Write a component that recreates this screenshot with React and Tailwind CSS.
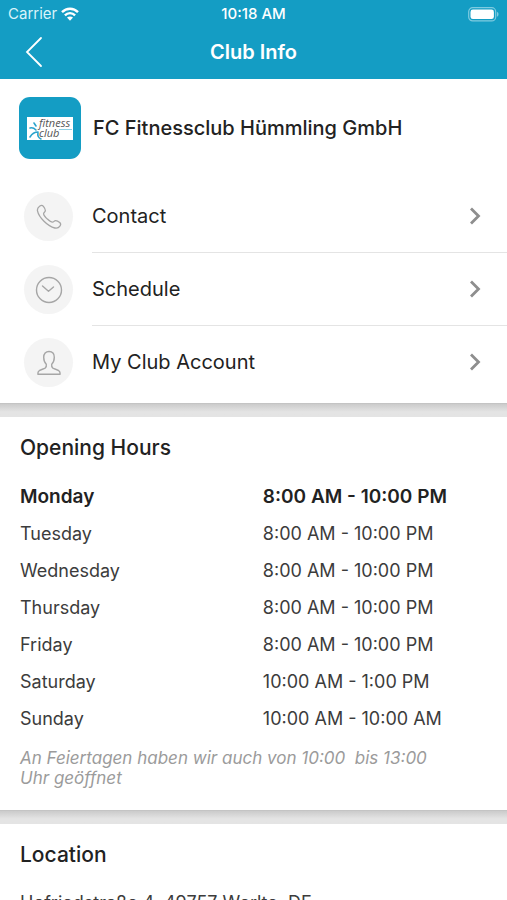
const links = [
  { label: 'Contact', icon: PhoneIcon },
  { label: 'Schedule', icon: ClockIcon },
  { label: 'My Club Account', icon: PersonIcon },
]

const hours = [
  { day: 'Monday', time: '8:00 AM - 10:00 PM', today: true },
  { day: 'Tuesday', time: '8:00 AM - 10:00 PM' },
  { day: 'Wednesday', time: '8:00 AM - 10:00 PM' },
  { day: 'Thursday', time: '8:00 AM - 10:00 PM' },
  { day: 'Friday', time: '8:00 AM - 10:00 PM' },
  { day: 'Saturday', time: '10:00 AM - 1:00 PM' },
  { day: 'Sunday', time: '10:00 AM - 10:00 AM' },
]

function PhoneIcon() {
  return (
    <svg viewBox="0 0 26 26" className="size-[26px]" fill="none" stroke="currentColor" strokeWidth="1.3" strokeLinejoin="round">
      <path d="M3.6 2.2C4.9 1.3 6.5 1.3 7.4 2.4C8.6 3.900 9.500 5.300 9.300 6.800C9.100 8.100 7.500 8.400 7.600 9.800C7.800 11.300 9.600 13.400 11.400 15.100C13.200 16.700 15 18.200 16.400 18.200C17.900 18.200 18.100 16.700 19.500 16.600C21.100 16.500 22.500 17.500 23.700 18.500C24.900 19.600 24.800 21 23.900 22.200C22.700 23.900 20.900 24.500 18.800 24C15.200 23.200 11.300 20.600 8 17.300C4.700 14 2.200 10.200 1.500 6.900C1.100 4.900 2 3.300 3.600 2.200Z" />
    </svg>
  )
}

function ClockIcon() {
  return (
    <svg viewBox="0 0 28 28" className="size-7" fill="none" stroke="currentColor" strokeWidth="1.4">
      <circle cx="14" cy="14" r="12.5" />
      <path d="M7.500 10L13.500 15.300L18.500 11" strokeLinecap="round" strokeLinejoin="round" />
    </svg>
  )
}

function PersonIcon() {
  return (
    <svg viewBox="0 0 24 26" className="h-[26px] w-6" fill="none" stroke="currentColor" strokeWidth="1.4" strokeLinejoin="round">
      <path d="M12 1.500C15.200 1.500 17.300 3.700 17.300 7.300C17.300 10.300 16.300 12.700 14.700 14.200C14.400 15.900 14.700 17.400 15.900 18.200C18 19.400 21.500 19.500 22.600 21.500C23 22.300 23.100 23.200 23.100 24.200H0.900C0.900 23.200 1 22.300 1.400 21.500C2.500 19.500 6 19.400 8.100 18.200C9.300 17.400 9.600 15.900 9.300 14.200C7.700 12.700 6.700 10.300 6.700 7.300C6.700 3.700 8.800 1.500 12 1.500Z" />
    </svg>
  )
}

const StatusBar = () => (
  <div className="grid h-7 grid-cols-3 items-center px-2 text-[15px] leading-5">
    <div className="flex items-center gap-1">
      <span className="text-[#d9f3fa]">Carrier</span>
      <svg viewBox="0 0 18 14" className="h-[14px] w-[18px]" fill="none" stroke="currentColor" strokeWidth="2.400">
        <path d="M1 5.200C5.500 0.600 12.500 0.600 17 5.200" />
        <path d="M3.900 8.300C6.800 5.400 11.200 5.400 14.100 8.300" />
        <path d="M6 10.600C7.700 9 10.300 9 12 10.600L9 13.700Z" fill="currentColor" stroke="none" />
      </svg>
    </div>
    <span className="text-center font-medium">10:18 AM</span>
    <svg viewBox="0 0 31 15" className="h-[15px] w-[31px] justify-self-end" fill="none">
      <rect x="0.700" y="0.700" width="27" height="13.200" rx="4" stroke="#7fcbe0" strokeWidth="1.200" />
      <rect x="2.500" y="2.500" width="23.400" height="9.600" rx="2.400" fill="white" />
      <path d="M29 5C31 5.500 31 9.200 29 9.700Z" fill="#7fcbe0" />
    </svg>
  </div>
)

const ClubLogo = () => (
  <svg viewBox="0 0 62 62" className="size-[62px] shrink-0" role="img" aria-label="Fitness club logo">
    <rect width="62" height="62" rx="11" fill="#149dc4" />
    <rect x="8" y="20" width="46" height="23" fill="white" />
    <g fill="none" stroke="#2ba3cc" strokeWidth="1.600" strokeLinecap="round">
      <path d="M11 31Q14 30 17 33M19 35Q14 35 11 40M15 26L17 29M19 36Q18 40 22 42" />
    </g>
    <path d="M40 32.500H53" stroke="#8fd0e4" strokeWidth="1" />
    <text fill="#555" fontFamily="'Open Sans', sans-serif" fontStyle="italic" fontSize="11">
      <tspan x="20" y="30">fitness</tspan>
      <tspan x="20" y="40">club</tspan>
    </text>
  </svg>
)

const Divider = () => (
  <div className="h-[14px] border-t border-[#c4c4c4] bg-linear-to-b from-[#cbcbcb] to-[#e4e4e4] to-60%" />
)

export default function App() {
  return (
    <div className="flex h-screen flex-col overflow-hidden bg-white font-['Inter',sans-serif] text-[#222]">
      <header className="shrink-0 bg-[#149dc4] text-white">
        <StatusBar />
        <div className="grid h-[51px] grid-cols-[48px_1fr_48px] items-start pt-2">
          <button type="button" aria-label="Back" className="flex justify-end pr-1">
            <svg viewBox="0 0 20 32" className="h-8 w-5" fill="none" stroke="currentColor" strokeWidth="1.800" strokeLinecap="round">
              <path d="M17 2L3 16L17 30" />
            </svg>
          </button>
          <h1 className="text-center text-[20px] leading-8 font-semibold">Club Info</h1>
        </div>
      </header>

      <main>
        <section className="pb-1">
          <div className="flex items-center gap-3 px-[19px] pt-[18px] pb-[21px]">
            <ClubLogo />
            <h2 className="text-[20px] leading-6 font-medium">FC Fitnessclub Hümmling GmbH</h2>
          </div>
          <nav>
            <ul>
              {links.map(({ label, icon: Icon }) => (
                <li key={label} className="group">
                  <a href="#" className="flex items-center gap-[19px] pl-6">
                    <span className="flex size-[49px] shrink-0 items-center justify-center rounded-full bg-[#f4f4f4] text-[#a6a6a6]">
                      <Icon />
                    </span>
                    <span className="flex h-[73px] flex-1 items-center justify-between border-b border-[#e4e4e4] pr-[26px] text-[20px] leading-6 group-last:border-transparent">
                      {label}
                      <svg viewBox="0 0 12 18" className="h-[18px] w-3" fill="none" stroke="#8e8e8e" strokeWidth="2.800">
                        <path d="M2 1.500L9.500 9L2 16.500" />
                      </svg>
                    </span>
                  </a>
                </li>
              ))}
            </ul>
          </nav>
        </section>

        <Divider />

        <section className="px-5 pt-[15px] pb-[22px]">
          <h2 className="text-[21px] leading-8 font-medium">Opening Hours</h2>
          <table className="mt-[14px] w-full text-left leading-5">
            <tbody>
              {hours.map(({ day, time, today }) => (
                <tr
                  key={day}
                  className={today ? 'h-[37px] text-[19px] font-semibold' : 'h-[37px] text-[18px] font-normal text-[#3c3c3c]'}
                >
                  <th scope="row" className="w-[52%] [font-weight:inherit]">{day}</th>
                  <td>{time}</td>
                </tr>
              ))}
            </tbody>
          </table>
          <p className="mt-[11px] max-w-[420px] text-[17px] leading-5 whitespace-pre-wrap text-[#9b9b9b] italic">
            {'An Feiertagen haben wir auch von 10:00  bis 13:00 Uhr geöffnet'}
          </p>
        </section>

        <Divider />

        <section className="px-5 pt-[15px]">
          <h2 className="text-[21px] leading-8 font-medium">Location</h2>
          <address className="mt-5 text-[18px] leading-6 text-[#3c3c3c] not-italic">Hofriedstraße 4, 49757 Werlte, DE</address>
        </section>
      </main>
    </div>
  )
}
